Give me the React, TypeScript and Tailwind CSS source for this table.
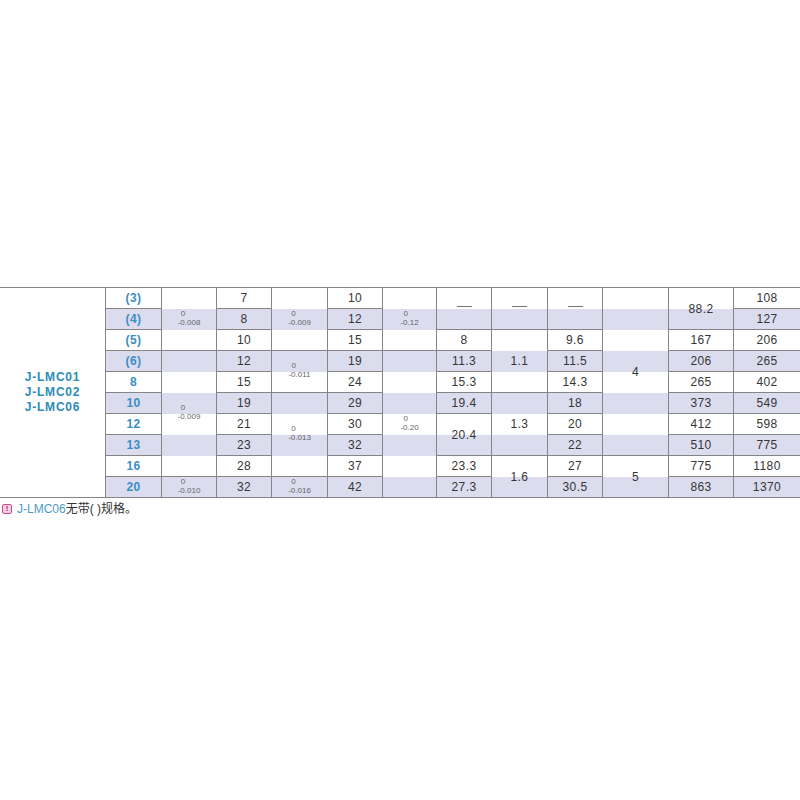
import React from "react";

type Cell = { col: number; row: number; span: number; kind: "num" | "size" | "tol" | "dash"; v?: string; lo?: string };

const colStart: Record<number, string> = {
  2: "col-start-2", 3: "col-start-3", 4: "col-start-4", 5: "col-start-5", 6: "col-start-6", 7: "col-start-7",
  8: "col-start-8", 9: "col-start-9", 10: "col-start-10", 11: "col-start-11", 12: "col-start-12", 13: "col-start-13",
};
const rowStart: Record<number, string> = {
  1: "row-start-1", 2: "row-start-2", 3: "row-start-3", 4: "row-start-4", 5: "row-start-5",
  6: "row-start-6", 7: "row-start-7", 8: "row-start-8", 9: "row-start-9", 10: "row-start-10",
};
const rowSpan: Record<number, string> = {
  1: "row-span-1", 2: "row-span-2", 3: "row-span-3", 4: "row-span-4", 5: "row-span-5",
  6: "row-span-6", 7: "row-span-7", 8: "row-span-8", 9: "row-span-9", 10: "row-span-10",
};

const cells: Cell[] = [];
const singles = (col: number, startRow: number, vals: string[], kind: "num" | "size" = "num") =>
  vals.forEach((v, i) => cells.push({ col, row: startRow + i, span: 1, kind, v }));

singles(2, 1, ["(3)", "(4)", "(5)", "(6)", "8", "10", "12", "13", "16", "20"], "size");
cells.push({ col: 3, row: 1, span: 3, kind: "tol", lo: "-0.008" });
cells.push({ col: 3, row: 4, span: 6, kind: "tol", lo: "-0.009" });
cells.push({ col: 3, row: 10, span: 1, kind: "tol", lo: "-0.010" });
singles(4, 1, ["7", "8", "10", "12", "15", "19", "21", "23", "28", "32"]);
cells.push({ col: 5, row: 1, span: 3, kind: "tol", lo: "-0.009" });
cells.push({ col: 5, row: 4, span: 2, kind: "tol", lo: "-0.011" });
cells.push({ col: 5, row: 6, span: 4, kind: "tol", lo: "-0.013" });
cells.push({ col: 5, row: 10, span: 1, kind: "tol", lo: "-0.016" });
singles(6, 1, ["10", "12", "15", "19", "24", "29", "30", "32", "37", "42"]);
cells.push({ col: 7, row: 1, span: 3, kind: "tol", lo: "-0.12" });
cells.push({ col: 7, row: 4, span: 7, kind: "tol", lo: "-0.20" });
cells.push({ col: 8, row: 1, span: 2, kind: "dash" });
singles(8, 3, ["8", "11.3", "15.3", "19.4"]);
cells.push({ col: 8, row: 7, span: 2, kind: "num", v: "20.4" });
singles(8, 9, ["23.3", "27.3"]);
cells.push({ col: 9, row: 1, span: 2, kind: "dash" });
cells.push({ col: 9, row: 3, span: 3, kind: "num", v: "1.1" });
cells.push({ col: 9, row: 6, span: 3, kind: "num", v: "1.3" });
cells.push({ col: 9, row: 9, span: 2, kind: "num", v: "1.6" });
cells.push({ col: 10, row: 1, span: 2, kind: "dash" });
singles(10, 3, ["9.6", "11.5", "14.3", "18", "20", "22", "27", "30.5"]);
cells.push({ col: 11, row: 1, span: 8, kind: "num", v: "4" });
cells.push({ col: 11, row: 9, span: 2, kind: "num", v: "5" });
cells.push({ col: 12, row: 1, span: 2, kind: "num", v: "88.2" });
singles(12, 3, ["167", "206", "265", "373", "412", "510", "775", "863"]);
singles(13, 1, ["108", "127", "206", "265", "402", "549", "598", "775", "1180", "1370"]);

function CellView({ c }: { c: Cell }) {
  const base = `${colStart[c.col]} ${rowStart[c.row]} ${rowSpan[c.span]} border-l border-b border-[#858585] flex items-center justify-center`;
  if (c.kind === "size") {
    return (
      <div className={base}>
        <span className="text-[12px] font-bold text-[#3b8ec6] tracking-[0.4px]">{c.v}</span>
      </div>
    );
  }
  if (c.kind === "tol") {
    return (
      <div className={base}>
        <div className="flex flex-col items-start text-[8px] leading-[9px] text-[#666] -mt-[3px]">
          <span className="pl-[3px]">0</span>
          <span>{c.lo}</span>
        </div>
      </div>
    );
  }
  if (c.kind === "dash") {
    return (
      <div className={base}>
        <span className="block w-[15px] h-px bg-[#777] -mt-[4px]" />
      </div>
    );
  }
  return (
    <div className={base}>
      <span className="text-[12px] text-[#363636] tracking-[0.4px]">{c.v}</span>
    </div>
  );
}

const stripeRows = ["row-start-2", "row-start-4", "row-start-6", "row-start-8", "row-start-10"];

export default function App() {
  return (
    <div className="w-[800px] h-[800px] bg-white pt-[287px]" style={{ fontFamily: "'Liberation Sans', Arial, 'Noto Sans CJK SC', sans-serif" }}>
      <div className="grid grid-cols-[105px_56px_55px_55px_56px_55px_54px_55px_56px_55px_66px_65px_1fr] grid-rows-[repeat(10,21px)] border-t border-[#858585]">
        {stripeRows.map((r) => (
          <div key={r} className={`${r} col-start-2 col-end-14 bg-[#dcdcef]`} />
        ))}
        <div className="col-start-1 row-start-1 row-span-10 border-b border-[#858585] flex flex-col items-center justify-center">
          <span className="text-[12px] font-bold text-[#2e8bb8] tracking-[0.8px] leading-[15px]">J-LMC01</span>
          <span className="text-[12px] font-bold text-[#2e8bb8] tracking-[0.8px] leading-[15px]">J-LMC02</span>
          <span className="text-[12px] font-bold text-[#2e8bb8] tracking-[0.8px] leading-[15px]">J-LMC06</span>
        </div>
        {cells.map((c, i) => (
          <CellView key={i} c={c} />
        ))}
      </div>
      <div className="flex items-center mt-[3px] pl-[2px] text-[12px] leading-[16px]">
        <span className="w-[10px] h-[10px] rounded-[2px] border border-[#d2478a] bg-[#f6d3e3] flex items-center justify-center text-[8px] font-bold text-[#c8246e] leading-none mr-[5px]">!</span>
        <span className="text-[#4a9bcb]">J-LMC06</span>
        <span className="text-[#333]">无带( )规格。</span>
      </div>
    </div>
  );
}
